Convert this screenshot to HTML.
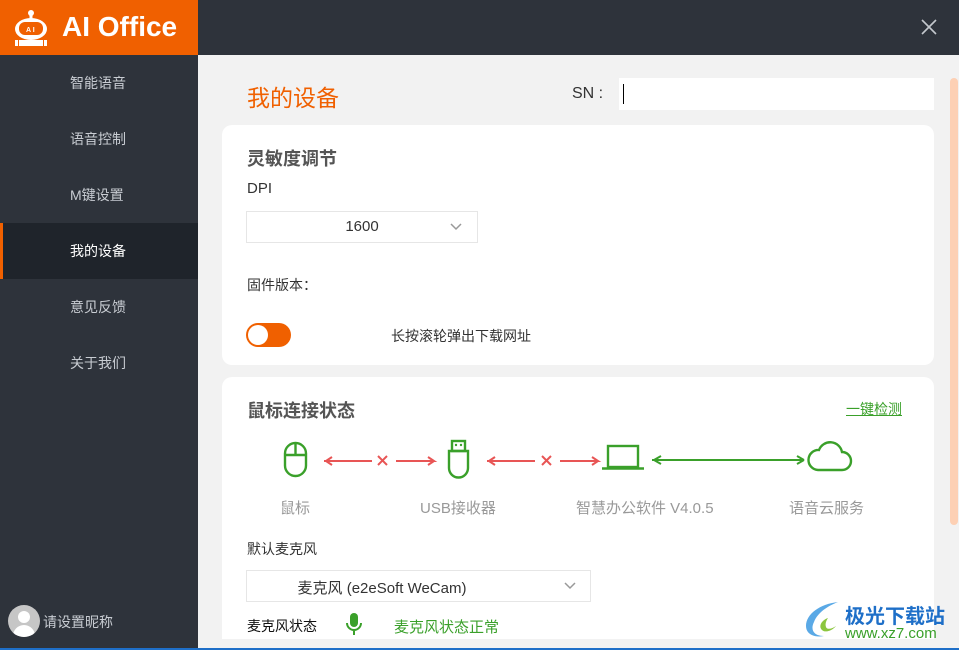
<!DOCTYPE html>
<html><head><meta charset="utf-8"><style>
*{margin:0;padding:0;box-sizing:border-box}
body{width:959px;height:650px;overflow:hidden;font-family:"Liberation Sans","Noto Sans CJK SC",sans-serif;background:#f2f2f2;position:relative}
.abs{position:absolute}
.side{left:0;top:55px;width:198px;height:595px;background:#2e333b}
.logo{left:0;top:0;width:198px;height:55px;background:#f06000;color:#fff}
.top{left:198px;top:0;width:761px;height:55px;background:#2e333b}
.nav{position:absolute;left:0;width:198px;height:56px;line-height:56px;color:#c8ccd2;font-size:14px;padding-left:70px}
.nav.act{background:#1f242b;color:#fff;border-left:3px solid #f06000;padding-left:67px}
.card{background:#fff;border-radius:10px}
.t{font-size:14px;color:#333}
</style></head><body>
<div class="abs logo">
<svg class="abs" style="left:10px;top:9px" width="42" height="40" viewBox="0 0 42 40"><circle cx="21" cy="4" r="3" fill="#fff"/><rect x="19.5" y="5" width="3" height="5" fill="#fff"/><ellipse cx="21" cy="20" rx="16" ry="11" fill="#fff"/><rect x="9" y="13" width="24" height="13" rx="6" fill="#f06000"/><text x="16" y="23" font-size="7" fill="#fff" font-family="Liberation Sans" font-weight="bold">A I</text><rect x="9" y="31" width="24" height="6" fill="#fff"/><rect x="5" y="31" width="3" height="6" fill="#fff"/><rect x="34" y="31" width="3" height="6" fill="#fff"/></svg>
<div class="abs" style="left:62px;top:11px;font-size:28px;font-weight:bold">AI Office</div>
</div>
<div class="abs top"><svg class="abs" style="left:723px;top:19px" width="16" height="16"><path d="M1 1l14 14M15 1L1 15" stroke="#c4c8cd" stroke-width="1.6"/></svg></div>
<div class="abs side">
<div class="nav" style="top:0">智能语音</div>
<div class="nav" style="top:56px">语音控制</div>
<div class="nav" style="top:112px">M键设置</div>
<div class="nav act" style="top:168px">我的设备</div>
<div class="nav" style="top:224px">意见反馈</div>
<div class="nav" style="top:280px">关于我们</div>
<div class="abs" style="left:8px;top:550px;width:32px;height:32px;border-radius:50%;background:#c6c6c6;overflow:hidden"><div class="abs" style="left:10px;top:6px;width:12px;height:12px;border-radius:50%;background:#fff"></div><div class="abs" style="left:5px;top:20px;width:22px;height:16px;border-radius:11px 11px 0 0;background:#fff"></div></div>
<div class="abs" style="left:43px;top:557px;color:#c8ccd2;font-size:14px">请设置昵称</div>
</div>
<div class="abs" style="left:247px;top:79px;font-size:23px;color:#f06000">我的设备</div>
<div class="abs" style="left:572px;top:85px;font-size:16px;color:#333">SN :</div>
<div class="abs" style="left:619px;top:78px;width:315px;height:32px;background:#fff"><div class="abs" style="left:4px;top:6px;width:1px;height:20px;background:#000"></div></div>
<div class="abs" style="left:950px;top:78px;width:8px;height:447px;background:#fdd0b4;border-radius:4px"></div>
<div class="abs card" style="left:222px;top:125px;width:712px;height:240px">
<div class="abs" style="left:25px;top:20px;font-size:18px;font-weight:bold;color:#555">灵敏度调节</div>
<div class="abs t" style="left:25px;top:55px;font-size:15px">DPI</div>
<div class="abs" style="left:24px;top:86px;width:232px;height:32px;border:1px solid #e6e6e6"><div class="abs t" style="left:0;width:230px;text-align:center;top:6px;font-size:15px">1600</div><svg class="abs" style="left:203px;top:11px" width="12" height="8"><path d="M1 1l5 5 5-5" stroke="#999" stroke-width="1.5" fill="none"/></svg></div>
<div class="abs t" style="left:25px;top:150px">固件版本：</div>
<div class="abs" style="left:24px;top:198px;width:45px;height:24px;border-radius:12px;background:#f06000"><div class="abs" style="left:2px;top:2px;width:20px;height:20px;border-radius:50%;background:#fff"></div></div>
<div class="abs t" style="left:169px;top:201px">长按滚轮弹出下载网址</div>
</div>
<div class="abs card" style="left:222px;top:377px;width:712px;height:262px;border-radius:10px 10px 0 0">
<div class="abs" style="left:25px;top:20px;font-size:18px;font-weight:bold;color:#555">鼠标连接状态</div>
<div class="abs" style="left:624px;top:22px;font-size:14px;color:#3aa02a;text-decoration:underline">一键检测</div>
<svg class="abs" style="left:50px;top:62px" width="600" height="42" viewBox="0 0 600 42">
<g stroke="#3aa02a" stroke-width="2.4" fill="none">
<rect x="13" y="4" width="21" height="33" rx="10.5"/><path d="M23.5 4v12M13 16h21"/>
<path d="M177 12h19v17a9.5 9.5 0 0 1-19 0z"/><rect x="180" y="2" width="13" height="10"/>
<rect x="336" y="7" width="30" height="21"/><path d="M330 29.5h42"/>
<path d="M546 31h24a9 9 0 0 0 0-18 12 12 0 0 0-23-2 10 10 0 0 0-1 20z"/>
</g>
<g stroke="#e85555" stroke-width="2" fill="none">
<path d="M52 22h48M54 22l6-4M54 22l6 4M124 22h38l-6-4M162 22l-6 4M106 17l9 9M115 17l-9 9"/>
<path d="M215 22h48M217 22l6-4M217 22l6 4M288 22h38l-6-4M326 22l-6 4M270 17l9 9M279 17l-9 9"/>
</g>
<path d="M380 21h152M382 21l7-4M382 21l7 4M532 21l-7-4M532 21l-7 4" stroke="#3aa02a" stroke-width="2" fill="none"/>
<circle cx="184" cy="6" r="1.2" fill="#3aa02a"/><circle cx="189" cy="6" r="1.2" fill="#3aa02a"/>
</svg>
<div class="abs" style="left:58px;top:120px;font-size:15px;color:#999">鼠标</div>
<div class="abs" style="left:198px;top:120px;font-size:15px;color:#999">USB接收器</div>
<div class="abs" style="left:354px;top:120px;font-size:15px;color:#999">智慧办公软件 V4.0.5</div>
<div class="abs" style="left:567px;top:120px;font-size:15px;color:#999">语音云服务</div>
<div class="abs t" style="left:25px;top:162px">默认麦克风</div>
<div class="abs" style="left:24px;top:193px;width:345px;height:32px;border:1px solid #e6e6e6"><div class="abs t" style="left:0;width:270px;text-align:center;top:6px;font-size:15px">麦克风 (e2eSoft WeCam)</div><svg class="abs" style="left:317px;top:11px" width="12" height="8"><path d="M1 1l5 5 5-5" stroke="#999" stroke-width="1.5" fill="none"/></svg></div>
<div class="abs" style="left:25px;top:239px;font-size:14px;color:#111">麦克风状态</div>
<svg class="abs" style="left:124px;top:236px" width="16" height="24"><rect x="4" y="0" width="8" height="14" rx="4" fill="#3aa02a"/><path d="M1 10a7 7 0 0 0 14 0M8 17v5" stroke="#3aa02a" stroke-width="2" fill="none"/></svg>
<div class="abs" style="left:172px;top:239px;font-size:15px;color:#3aa02a">麦克风状态正常</div>
</div>
<svg class="abs" style="left:800px;top:598px" width="44" height="44"><path d="M38 4C20 6 6 16 6 28c0 8 8 12 18 10C14 38 10 32 14 24 18 14 28 8 38 4z" fill="#5aa9e6"/><path d="M28 20c-6 2-10 8-6 12 3 3 10 1 14-4-4 3-9 4-10 1-1-3 0-6 2-9z" fill="#8cc63f"/></svg>
<div class="abs" style="left:845px;top:600px;font-size:20px;font-weight:bold;color:#1e6fc8">极光下载站</div>
<div class="abs" style="left:845px;top:625px;font-size:15px;color:#3aa02a">www.xz7.com</div>
<div class="abs" style="left:0;top:648px;width:959px;height:2px;background:#1e6fc8"></div>
</body></html>
